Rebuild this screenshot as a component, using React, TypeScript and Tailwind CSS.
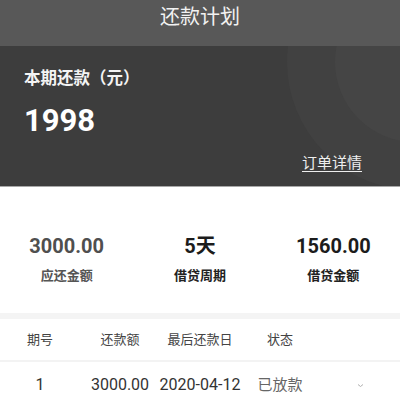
import React from "react";

export default function App() {
  return (
    <div
      className="w-[400px] h-[404px] overflow-hidden bg-white flex flex-col"
      style={{ fontFamily: 'Roboto, "Noto Sans CJK SC", sans-serif' }}
    >
      <div className="h-[46px] shrink-0 bg-[#585858] text-center pt-[4px]">
        <span className="text-[20px] leading-[26px] text-[#f2f2f2]">还款计划</span>
      </div>
      <div className="relative h-[140px] shrink-0 overflow-hidden bg-[#3d3d3d] px-[24px] flex flex-col">
        <div className="absolute left-[287px] top-[-112px] w-[256px] h-[256px] rounded-full bg-[#414141]" />
        <div className="absolute left-[335px] top-[-64px] w-[160px] h-[160px] rounded-full bg-[#454545]" />
        <div className="relative pt-[22px] text-[16.5px] leading-[22px] font-bold text-[#f4f4f4]">本期还款（元）</div>
        <div className="relative mt-[13px] text-[31px] leading-[36px] font-bold text-white">1998</div>
        <div className="relative mt-[14px] self-end mr-[14px] text-[15px] leading-[20px] text-[#eeeeee] underline underline-offset-[3px]">
          订单详情
        </div>
      </div>
      <div className="h-[1px] shrink-0 bg-[#a8a8a8]" />
      <div className="h-[126px] shrink-0 grid grid-cols-3 pt-[46px]">
        <div className="flex flex-col items-center">
          <div className="text-[20px] leading-[26px] font-bold text-[#4f4f4f]">3000.00</div>
          <div className="mt-[8px] text-[13px] leading-[18px] font-semibold text-[#555555]">应还金额</div>
        </div>
        <div className="flex flex-col items-center">
          <div className="text-[20px] leading-[26px] font-bold text-[#1c1c1c]">5天</div>
          <div className="mt-[8px] text-[13px] leading-[18px] font-bold text-[#222222]">借贷周期</div>
        </div>
        <div className="flex flex-col items-center">
          <div className="text-[20px] leading-[26px] font-bold text-[#1c1c1c]">1560.00</div>
          <div className="mt-[8px] text-[13px] leading-[18px] font-bold text-[#222222]">借贷金额</div>
        </div>
      </div>
      <div className="h-[6px] shrink-0 bg-[#f4f4f4]" />
      <div className="h-[41px] shrink-0 grid grid-cols-5 items-center text-[13px] text-[#444444] whitespace-nowrap">
        <div className="text-center">期号</div>
        <div className="text-center">还款额</div>
        <div className="text-center">最后还款日</div>
        <div className="text-center">状态</div>
        <div />
      </div>
      <div className="h-[2px] shrink-0 bg-[#f3f3f3]" />
      <div className="h-[46px] shrink-0 grid grid-cols-5 items-center text-[16px] text-[#333333] whitespace-nowrap">
        <div className="text-center">1</div>
        <div className="text-center">3000.00</div>
        <div className="flex justify-center">2020-04-12</div>
        <div className="text-center text-[15px] text-[#666666]">已放款</div>
        <div className="flex justify-center">
          <svg width="7" height="5" viewBox="0 0 7 5" fill="none">
            <path d="M1 1.5 L3.5 3.5 L6 1.5" stroke="#b0b0b0" strokeWidth="1" />
          </svg>
        </div>
      </div>
    </div>
  );
}
